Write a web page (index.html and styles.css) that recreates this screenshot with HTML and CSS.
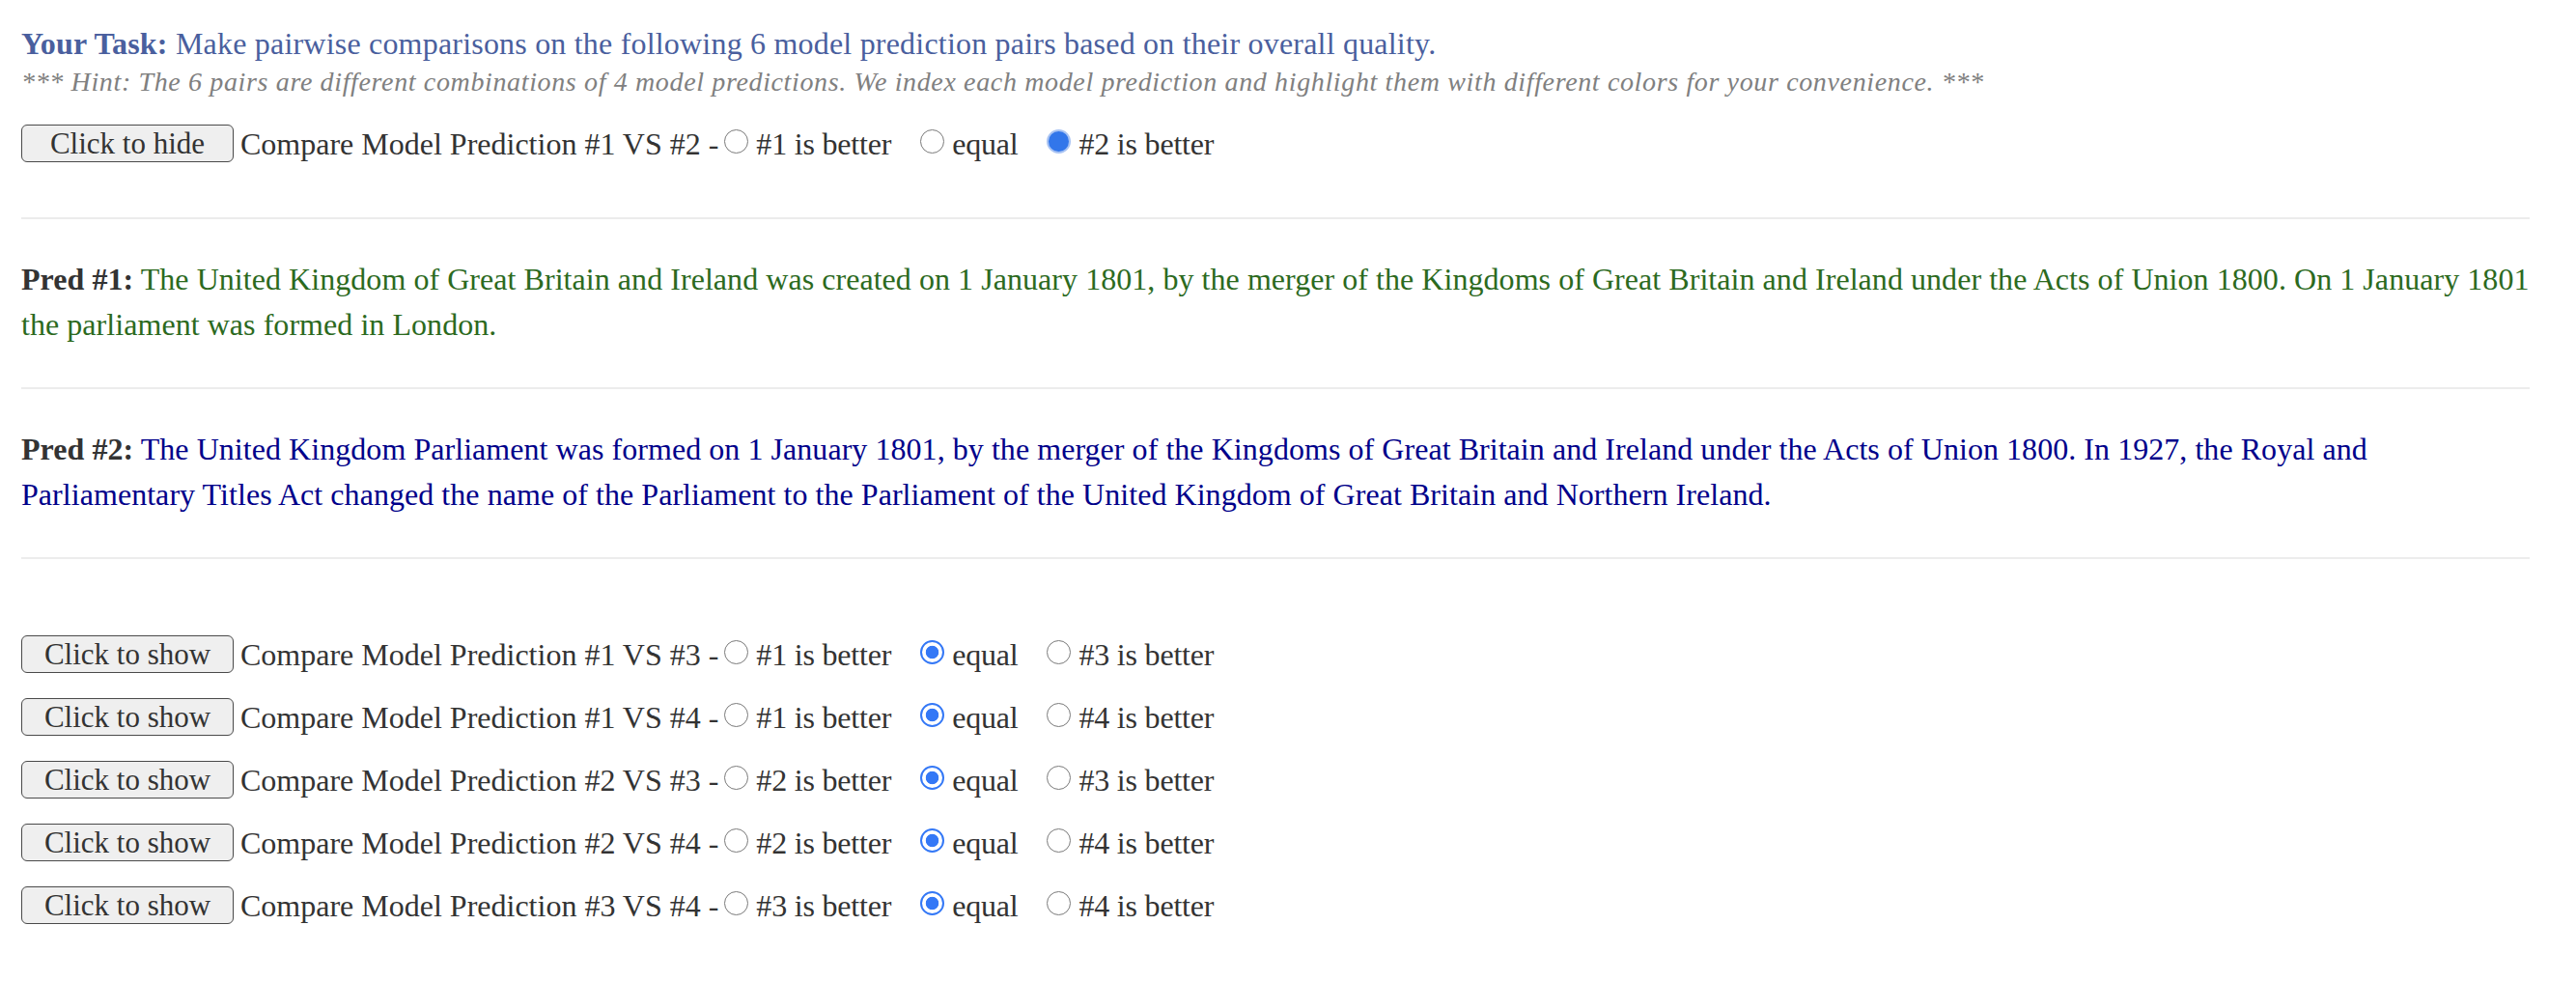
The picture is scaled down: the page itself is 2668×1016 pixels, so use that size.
FILE: index.html
```html
<!DOCTYPE html>
<html>
<head>
<meta charset="utf-8">
<link rel="stylesheet" href="styles.css">
</head>
<body>
<div class="page">
  <div class="task"><b>Your Task:</b> Make pairwise comparisons on the following 6 model prediction pairs based on their overall quality.</div>
  <div class="hint">*** Hint: The 6 pairs are different combinations of 4 model predictions. We index each model prediction and highlight them with different colors for your convenience. ***</div>

  <div class="row first">
    <button class="toggle">Click to hide</button>
    <span class="label">Compare Model Prediction #1 VS #2 -</span>
    <input type="radio" class="radio" name="p12"><span class="opt">#1 is better</span>
    <input type="radio" class="radio" name="p12"><span class="opt">equal</span>
    <input type="radio" class="radio solid" name="p12" checked><span class="opt">#2 is better</span>
  </div>

  <hr class="sep sep-top">
  <p class="pred green"><b class="tag">Pred #1:</b> The United Kingdom of Great Britain and Ireland was created on 1 January 1801, by the merger of the Kingdoms of Great Britain and Ireland under the Acts of Union 1800. On 1 January 1801 the parliament was formed in London.</p>
  <hr class="sep">
  <p class="pred navy"><b class="tag">Pred #2:</b> The United Kingdom Parliament was formed on 1 January 1801, by the merger of the Kingdoms of Great Britain and Ireland under the Acts of Union 1800. In 1927, the Royal and Parliamentary Titles Act changed the name of the Parliament to the Parliament of the United Kingdom of Great Britain and Northern Ireland.</p>
  <hr class="sep">

  <div class="rows">
    <div class="row">
      <button class="toggle">Click to show</button>
      <span class="label">Compare Model Prediction #1 VS #3 -</span>
      <input type="radio" class="radio" name="p13"><span class="opt">#1 is better</span>
      <input type="radio" class="radio" name="p13" checked><span class="opt">equal</span>
      <input type="radio" class="radio" name="p13"><span class="opt">#3 is better</span>
    </div>
    <div class="row">
      <button class="toggle">Click to show</button>
      <span class="label">Compare Model Prediction #1 VS #4 -</span>
      <input type="radio" class="radio" name="p14"><span class="opt">#1 is better</span>
      <input type="radio" class="radio" name="p14" checked><span class="opt">equal</span>
      <input type="radio" class="radio" name="p14"><span class="opt">#4 is better</span>
    </div>
    <div class="row">
      <button class="toggle">Click to show</button>
      <span class="label">Compare Model Prediction #2 VS #3 -</span>
      <input type="radio" class="radio" name="p23"><span class="opt">#2 is better</span>
      <input type="radio" class="radio" name="p23" checked><span class="opt">equal</span>
      <input type="radio" class="radio" name="p23"><span class="opt">#3 is better</span>
    </div>
    <div class="row">
      <button class="toggle">Click to show</button>
      <span class="label">Compare Model Prediction #2 VS #4 -</span>
      <input type="radio" class="radio" name="p24"><span class="opt">#2 is better</span>
      <input type="radio" class="radio" name="p24" checked><span class="opt">equal</span>
      <input type="radio" class="radio" name="p24"><span class="opt">#4 is better</span>
    </div>
    <div class="row">
      <button class="toggle">Click to show</button>
      <span class="label">Compare Model Prediction #3 VS #4 -</span>
      <input type="radio" class="radio" name="p34"><span class="opt">#3 is better</span>
      <input type="radio" class="radio" name="p34" checked><span class="opt">equal</span>
      <input type="radio" class="radio" name="p34"><span class="opt">#4 is better</span>
    </div>
  </div>
</div>
</body>
</html>
```

FILE: styles.css
```css
html, body {
  margin: 0;
  padding: 0;
  background: #ffffff;
}

.page {
  padding: 26px 48px 0 22px;
  font-family: "Liberation Serif", "Times New Roman", serif;
  font-size: 32px;
  color: #333333;
}

.task {
  color: #4a5f9e;
  line-height: 38px;
  letter-spacing: 0.2px;
}

.task b {
  font-weight: bold;
}

.hint {
  margin-top: 2px;
  font-size: 28px;
  font-style: italic;
  color: #808080;
  line-height: 38px;
  letter-spacing: 0.64px;
}

.row {
  display: flex;
  align-items: center;
  height: 39px;
  white-space: nowrap;
}

.row.first {
  margin-top: 25px;
}

.toggle {
  box-sizing: border-box;
  width: 220px;
  height: 39px;
  margin: 0 7px 0 0;
  padding: 0;
  font-family: "Liberation Serif", "Times New Roman", serif;
  font-size: 31px;
  line-height: 36px;
  color: #333333;
  background: #efefef;
  border: 1.5px solid #4a4a4a;
  border-radius: 6px;
}

.label {
  line-height: 38px;
}

.opt {
  line-height: 38px;
  margin-right: 24px;
  letter-spacing: -0.2px;
}

.radio {
  -webkit-appearance: none;
  appearance: none;
  box-sizing: border-box;
  width: 25px;
  height: 25px;
  margin: 0 8px 5px 6px;
  border: 1.5px solid #7a7a7a;
  border-radius: 50%;
  background: #ffffff;
  flex: none;
}

.radio:checked {
  border: 2.5px solid #3478f6;
  background: radial-gradient(circle, #3478f6 0, #3478f6 6.3px, #ffffff 7.1px);
}

.radio.solid:checked {
  border: 2px solid #a8c3f3;
  background: #3276ea;
}

.sep {
  height: 2px;
  margin: 0;
  border: 0;
  background: #ececec;
}

.sep-top {
  margin-top: 57px;
}

.pred {
  margin: 39px -8px 42px 0;
  line-height: 46.5px;
  letter-spacing: 0.05px;
}

.tag {
  color: #333333;
}

.green {
  color: #2c6a1e;
}

.navy {
  color: #00008a;
}

.rows {
  margin-top: 79px;
  display: flex;
  flex-direction: column;
  gap: 26px;
}
```
